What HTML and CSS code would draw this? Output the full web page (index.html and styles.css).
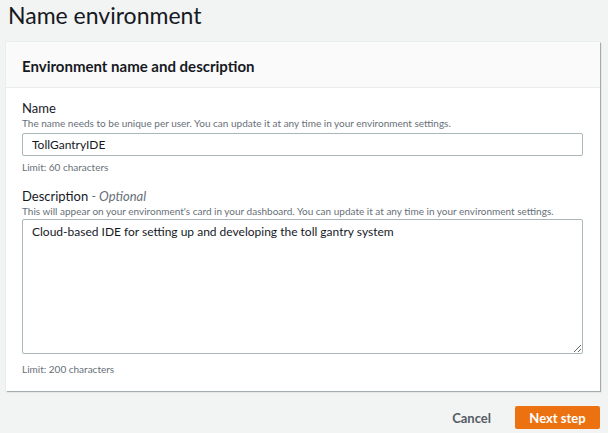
FILE: index.html
```html
<!DOCTYPE html>
<html>
<head>
<meta charset="utf-8">
<link rel="stylesheet" href="styles.css">
</head>
<body>
<div class="page">
  <h1 class="title">Name environment</h1>
  <section class="card">
    <header class="card-header">
      <h2 class="card-title">Environment name and description</h2>
    </header>
    <div class="card-body">
      <div class="field">
        <label class="label">Name</label>
        <div class="help">The name needs to be unique per user. You can update it at any time in your environment settings.</div>
        <input class="input" type="text" value="TollGantryIDE">
        <div class="limit">Limit: 60 characters</div>
      </div>
      <div class="field field-desc">
        <label class="label">Description <span class="optional">- Optional</span></label>
        <div class="help">This will appear on your environment's card in your dashboard. You can update it at any time in your environment settings.</div>
        <textarea class="textarea">Cloud-based IDE for setting up and developing the toll gantry system</textarea>
        <div class="limit">Limit: 200 characters</div>
      </div>
    </div>
  </section>
  <div class="actions">
    <button class="btn-link">Cancel</button>
    <button class="btn-primary">Next step</button>
  </div>
</div>
</body>
</html>
```

FILE: styles.css
```css
html, body {
  margin: 0;
  padding: 0;
  background: #f2f3f3;
  font-family: Lato, "Liberation Sans", sans-serif;
  color: #16191f;
}
.page {
  padding: 0 8px 0 6px;
  width: 594px;
  box-sizing: content-box;
}
.title {
  margin: 0;
  padding: 1px 0 0 2px;
  font-size: 23px;
  font-weight: 400;
  line-height: 28px;
  height: 41px;
  color: #16191f;
}
.card {
  background: #fff;
  box-shadow: 1px 1px 1px 0 rgba(0,28,36,0.3), 0 0 0 1px #eaeded;
}
.card-header {
  background: #fafafa;
  border-bottom: 1px solid #eaeded;
  height: 45px;
  display: flex;
  align-items: center;
  padding: 0 16px;
}
.card-title {
  margin: 0;
  font-size: 15px;
  font-weight: 700;
  line-height: 20px;
  padding-top: 2px;
}
.card-body {
  padding: 12px 16px 15px 16px;
}
.field {
  display: flex;
  flex-direction: column;
}
.field-desc {
  margin-top: 14px;
}
.label {
  font-size: 13px;
  line-height: 16px;
  color: #16191f;
}
.optional {
  font-style: italic;
  color: #687078;
}
.help {
  font-size: 10px;
  line-height: 14px;
  color: #687078;
  margin-bottom: 3px;
}
.field-desc .help {
  margin-bottom: 1px;
}
.input, .textarea {
  font-family: Lato, "Liberation Sans", sans-serif;
  font-size: 12px;
  color: #16191f;
  border: 1px solid #aab7b8;
  border-radius: 2px;
  box-sizing: border-box;
  width: 561px;
  margin: 0;
  background: #fff;
}
.input {
  height: 23px;
  padding: 0 9px;
}
.textarea {
  height: 135px;
  padding: 3px 9px;
  resize: vertical;
  line-height: 18px;
}
.limit {
  font-size: 10px;
  line-height: 14px;
  color: #687078;
  margin-top: 4px;
}
.field-desc .limit {
  margin-top: 8px;
}
.actions {
  display: flex;
  justify-content: flex-end;
  align-items: center;
  gap: 24px;
  margin-top: 15px;
}
.btn-link {
  background: none;
  border: none;
  font-family: Lato, "Liberation Sans", sans-serif;
  font-weight: 700;
  font-size: 13px;
  color: #545b64;
  padding: 0;
}
.btn-primary {
  background: #ec7211;
  border: none;
  border-radius: 2px;
  color: #fff;
  font-family: Lato, "Liberation Sans", sans-serif;
  font-weight: 700;
  font-size: 13px;
  width: 85px;
  height: 23px;
  padding: 0;
}
```
